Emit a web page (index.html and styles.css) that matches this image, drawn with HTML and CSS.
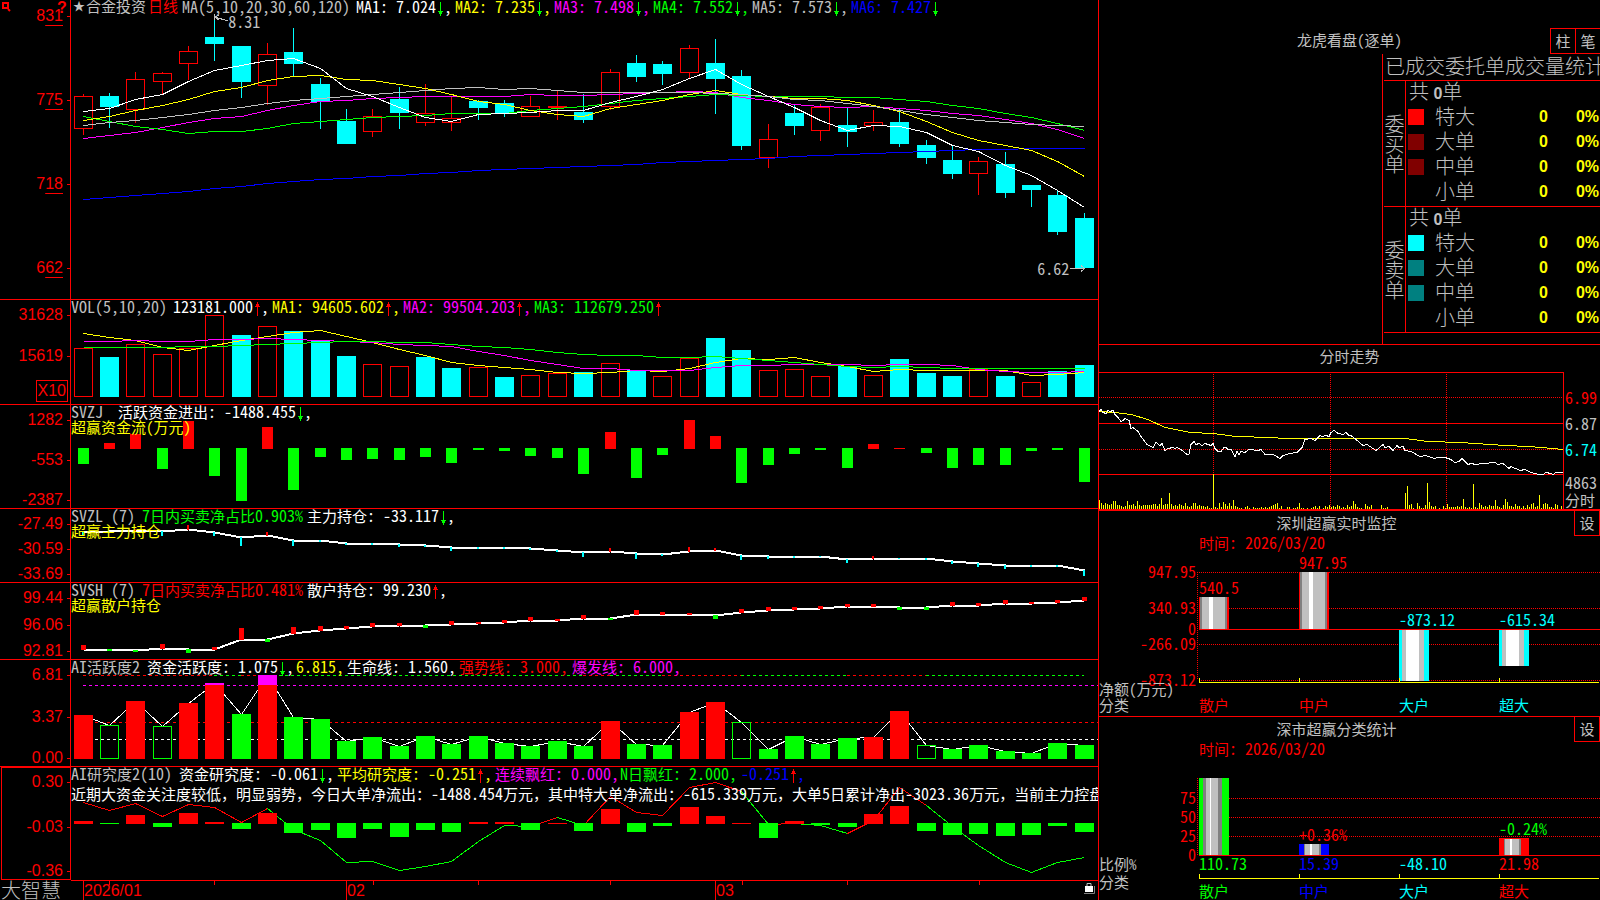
FILE: index.html
```
<!DOCTYPE html>
<html lang="zh-CN">
<head>
    <meta charset="UTF-8">
    <meta name="viewport" content="width=device-width, initial-scale=1.0">
    <title>合金投资 日线</title>
    <link rel="stylesheet" href="styles.css">
</head>
<body>
    <svg class="defs" aria-hidden="true">
        <symbol id="down" viewBox="0 0 8 14">
            <path d="M4.5 0V14M2 9.500H7M3 10.500H6M3 11.500H6" stroke="#00ff00" fill="none"/>
        </symbol>
        <symbol id="up" viewBox="0 0 8 14">
            <path d="M4.5 0V14M2 4.500H7M3 3.500H6M3 2.500H6" stroke="#ff0000" fill="none"/>
        </symbol>
    </svg>

    <div class="app">
        <main class="charts">
            <section class="panel">
                <div class="axis axis-main">
                    <svg class="corner" viewBox="0 0 10 10"><path d="M1 1H6V6H1ZM6 7L8 9" fill="none" stroke="#ff0000" stroke-width="2"/></svg>
                    <b class="help">?</b>
                    <span>8<u>31</u></span><span>7<u>75</u></span><span>7<u>18</u></span><span>6<u>62</u></span>
                </div>
                <div class="plot">
                    <svg id="kline" class="chart" viewBox="0 0 1027 299" preserveAspectRatio="none"></svg>
                    <div class="legend legend-main">
                        <span class="star">★</span><span class="zh">合金投资</span><span class="zh red">日线</span><span>MA(5,10,20,30,60,120)</span>
                        <span class="white">MA1: 7.024<svg class="arrow"><use href="#down"/></svg>,</span>
                        <span class="yellow">MA2: 7.235<svg class="arrow"><use href="#down"/></svg>,</span>
                        <span class="magenta">MA3: 7.498<svg class="arrow"><use href="#down"/></svg>,</span>
                        <span class="green">MA4: 7.552<svg class="arrow"><use href="#down"/></svg>,</span>
                        <span>MA5: 7.573<svg class="arrow"><use href="#down"/></svg>,</span>
                        <span class="blue">MA6: 7.427<svg class="arrow"><use href="#down"/></svg></span>
                    </div>
                    <span class="mark mark-high">8.31</span>
                    <span class="mark mark-low">6.62</span>
                </div>
            </section>

            <section class="panel">
                <div class="axis axis-vol">
                    <span>31628</span><span>15619</span><span class="unit">X10</span>
                </div>
                <div class="plot">
                    <svg id="vol" class="chart" viewBox="0 0 1027 104" preserveAspectRatio="none"></svg>
                    <div class="legend legend-vol">
                        <span>VOL(5,10,20)</span>
                        <span class="white">123181.000<svg class="arrow"><use href="#up"/></svg>,</span>
                        <span class="yellow">MA1: 94605.602<svg class="arrow"><use href="#up"/></svg>,</span>
                        <span class="magenta">MA2: 99504.203<svg class="arrow"><use href="#up"/></svg>,</span>
                        <span class="green">MA3: 112679.250<svg class="arrow"><use href="#up"/></svg></span>
                    </div>
                </div>
            </section>

            <section class="panel">
                <div class="axis"><span>1282</span><span>-553</span><span>-2387</span></div>
                <div class="plot">
                    <svg id="svzj" class="chart" viewBox="0 0 1027 103" preserveAspectRatio="none"></svg>
                    <div class="legend legend-svzj">
                        <span>SVZJ</span>
                        <span class="white"><span class="zh">活跃资金进出</span>: -1488.455<svg class="arrow"><use href="#down"/></svg>,</span>
                    </div>
                    <p class="subtitle zh">超赢资金流(万元)</p>
                </div>
            </section>

            <section class="panel">
                <div class="axis"><span>-27.49</span><span>-30.59</span><span>-33.69</span></div>
                <div class="plot">
                    <svg id="svzl" class="chart" viewBox="0 0 1027 73" preserveAspectRatio="none"></svg>
                    <div class="legend legend-hold">
                        <span>SVZL (7)</span>
                        <span class="green">7<span class="zh">日内买卖净占比</span>0.903%</span>
                        <span class="white"><span class="zh">主力持仓</span>: -33.117<svg class="arrow"><use href="#down"/></svg>,</span>
                    </div>
                    <p class="subtitle zh">超赢主力持仓</p>
                </div>
            </section>

            <section class="panel">
                <div class="axis"><span>99.44</span><span>96.06</span><span>92.81</span></div>
                <div class="plot">
                    <svg id="svsh" class="chart" viewBox="0 0 1027 76" preserveAspectRatio="none"></svg>
                    <div class="legend legend-hold">
                        <span>SVSH (7)</span>
                        <span class="red">7<span class="zh">日内买卖净占比</span>0.481%</span>
                        <span class="white"><span class="zh">散户持仓</span>: 99.230<svg class="arrow"><use href="#up"/></svg>,</span>
                    </div>
                    <p class="subtitle zh">超赢散户持仓</p>
                </div>
            </section>

            <section class="panel">
                <div class="axis"><span>6.81</span><span>3.37</span><span>0.00</span></div>
                <div class="plot">
                    <svg id="active" class="chart" viewBox="0 0 1027 106" preserveAspectRatio="none"></svg>
                    <div class="legend legend-active">
                        <span>AI<span class="zh">活跃度</span>2</span>
                        <span class="white"><span class="zh">资金活跃度</span>: 1.075<svg class="arrow"><use href="#down"/></svg>,</span>
                        <span class="yellow">6.815,</span>
                        <span class="white"><span class="zh">生命线</span>: 1.560,</span>
                        <span class="red"><span class="zh">强势线</span>: 3.000,</span>
                        <span class="magenta"><span class="zh">爆发线</span>: 6.000,</span>
                    </div>
                </div>
            </section>

            <section class="panel panel-last">
                <div class="axis axis-selected"><span>0.30</span><span>-0.03</span><span>-0.36</span></div>
                <div class="plot">
                    <svg id="research" class="chart" viewBox="0 0 1027 113" preserveAspectRatio="none"></svg>
                    <div class="legend legend-research">
                        <span>AI<span class="zh">研究度</span>2(10)</span>
                        <span class="white"><span class="zh">资金研究度</span>: -0.061<svg class="arrow"><use href="#down"/></svg>,</span>
                        <span class="yellow"><span class="zh">平均研究度</span>: -0.251<svg class="arrow"><use href="#up"/></svg>,</span>
                        <span class="magenta"><span class="zh">连续飘红</span>: 0.000,</span>
                        <span class="green">N<span class="zh">日飘红</span>: 2.000,</span>
                        <span class="blue">-0.251<svg class="arrow"><use href="#up"/></svg>,</span>
                    </div>
                    <p class="advice"><span class="zh">近期大资金关注度较低，明显弱势，今日大单净流出：</span>-1488.454<span class="zh">万元，其中特大单净流出：</span>-615.339<span class="zh">万元，大单</span>5<span class="zh">日累计净出</span>-3023.36<span class="zh">万元，当前主力控盘</span></p>
                </div>
            </section>

            <footer class="timeline">
                <div class="brand">大智慧</div>
                <div class="months">
                    <svg id="ticks" class="chart" viewBox="0 0 1027 19" preserveAspectRatio="none"></svg>
                    <span></span><span>2026/01</span><span>02</span><span>03</span>
                    <svg class="lock" viewBox="0 0 11 12">
                        <path d="M3 4V1.500H7V4" fill="none" stroke="#c0c0c0"/>
                        <path d="M1 4H9V10H1Z" fill="#ffffff"/>
                        <path d="M0 11.500H10.500V4" fill="none" stroke="#808080"/>
                    </svg>
                </div>
            </footer>
        </main>

        <aside class="side">
            <section class="orders">
                <header class="orders-head">
                    <h2>龙虎看盘(逐单)</h2>
                    <div class="switch"><button type="button">柱</button><button type="button">笔</button></div>
                </header>
                <div class="orders-body">
                    <div class="stats">
                        <h3>已成交委托单成交量统计</h3>
                        <table>
                            <colgroup><col class="c-side"><col class="c-swatch"><col class="c-name"><col class="c-count"><col class="c-pct"></colgroup>
                            <tbody>
                                <tr><th rowspan="5" scope="rowgroup">委<br>买<br>单</th><td colspan="4" class="total">共<b> 0</b>单</td></tr>
                                <tr><td><i class="swatch buy-xl"></i></td><td>特大</td><td class="num">0</td><td class="num">0%</td></tr>
                                <tr><td><i class="swatch buy"></i></td><td>大单</td><td class="num">0</td><td class="num">0%</td></tr>
                                <tr><td><i class="swatch buy"></i></td><td>中单</td><td class="num">0</td><td class="num">0%</td></tr>
                                <tr><td></td><td>小单</td><td class="num">0</td><td class="num">0%</td></tr>
                            </tbody>
                            <tbody>
                                <tr><th rowspan="5" scope="rowgroup">委<br>卖<br>单</th><td colspan="4" class="total">共<b> 0</b>单</td></tr>
                                <tr><td><i class="swatch sell-xl"></i></td><td>特大</td><td class="num">0</td><td class="num">0%</td></tr>
                                <tr><td><i class="swatch sell"></i></td><td>大单</td><td class="num">0</td><td class="num">0%</td></tr>
                                <tr><td><i class="swatch sell"></i></td><td>中单</td><td class="num">0</td><td class="num">0%</td></tr>
                                <tr><td></td><td>小单</td><td class="num">0</td><td class="num">0%</td></tr>
                            </tbody>
                        </table>
                    </div>
                </div>
            </section>

            <section class="intraday">
                <h2>分时走势</h2>
                <div class="intraday-body">
                    <svg id="intraday" viewBox="0 0 466 137" preserveAspectRatio="none"></svg>
                    <div class="scale">
                        <span class="red">6.99</span><span>6.87</span><span class="cyan">6.74</span>
                        <span class="scale-vol">4863</span><span class="zh">分时</span>
                    </div>
                </div>
            </section>

            <section class="monitor">
                <header class="monitor-head"><h2>深圳超赢实时监控</h2><button type="button">设</button></header>
                <p class="date"><span class="zh">时间</span>: 2026/03/20</p>
                <svg id="netflow" width="501" height="164"></svg>
            </section>

            <section class="monitor monitor-last">
                <header class="monitor-head"><h2>深市超赢分类统计</h2><button type="button">设</button></header>
                <p class="date"><span class="zh">时间</span>: 2026/03/20</p>
                <svg id="ratio" width="501" height="142"></svg>
            </section>
        </aside>
    </div>

    <script src="charts.js"></script>
</body>
</html>
```
FILE: styles.css
```
* {
    box-sizing: border-box;
}

body {
    margin: 0;
    background: #000000;
    color: #c0c0c0;
    font-family: "Noto Sans CJK SC", sans-serif;
    font-size: 16px;
    font-feature-settings: "hwid";
}

h2, h3, p {
    margin: 0;
    font-weight: inherit;
}

.defs {
    display: none;
}

.zh {
    font-size: 15px;
}

.white { color: #ffffff; }
.yellow { color: #ffff00; }
.magenta { color: #ff00ff; }
.green { color: #00ff00; }
.blue { color: #0000ff; }
.red { color: #ff0000; }
.cyan { color: #00ffff; }

.app {
    display: grid;
    grid-template-columns: minmax(0, 1fr) 502px;
    min-height: 100vh;
}

/* left side: stacked indicator panels */
.charts {
    display: grid;
    grid-template-rows: 300fr 105fr 104fr 74fr 77fr 107fr 113fr 20px;
}

.panel {
    display: grid;
    grid-template-columns: 71px minmax(0, 1fr);
    border-bottom: 1px solid #ff0000;
}

.panel-last {
    border-bottom: none;
}

.axis {
    position: relative;
    display: flex;
    flex-direction: column;
    justify-content: space-between;
    align-items: flex-end;
    padding: 7px 7px 0 0;
    border-right: 1px solid #ff0000;
    color: #ff0000;
    font-family: "Liberation Sans", sans-serif;
    line-height: 16px;
}

.axis span {
    position: relative;
}

.axis span::after {
    content: "";
    position: absolute;
    top: 8px;
    left: calc(100% + 4px);
    width: 3px;
    height: 1px;
    background: #ff0000;
}

.axis-main {
    padding-top: 8px;
    padding-bottom: 23px;
}

.axis u {
    text-decoration-thickness: 1px;
    text-underline-offset: 4px;
}

.axis-vol {
    padding-right: 2px;
    padding-bottom: 2px;
}

.axis-vol span {
    margin-right: 5px;
}

.axis-vol span:nth-child(2) {
    margin-top: 9px;
}

.axis-vol .unit {
    margin-right: 0;
    padding: 0 1px;
    border: 1px solid #ff0000;
    line-height: 20px;
}

.axis-vol .unit::after {
    display: none;
}

.axis-selected {
    margin-left: 1px;
    padding-top: 6px;
    border: 1px solid #ff0000;
}

.corner {
    position: absolute;
    top: 2px;
    left: 2px;
    width: 10px;
    height: 10px;
}

.help {
    position: absolute;
    top: 0;
    left: 57px;
}

.plot {
    position: relative;
    overflow-x: clip;
}

.chart {
    position: absolute;
    inset: 0;
    width: 100%;
    height: 100%;
    shape-rendering: crispEdges;
}

.legend {
    position: relative;
    display: grid;
    line-height: 12px;
    white-space: nowrap;
}

.legend-main { grid-template-columns: 13px 62px 34px 174px repeat(6, 99px); padding-left: 2px; }
.legend-vol { grid-template-columns: 102px 99px 131px 131px auto; }
.legend-svzj { grid-template-columns: 47px auto; }
.legend-hold { grid-template-columns: 71px 165px auto; }
.legend-active { grid-template-columns: 76px 149px 51px 112px 113px auto; }
.legend-research { grid-template-columns: 108px 158px 158px 125px 121px auto; }

.star {
    font-size: 12px;
}

.arrow {
    width: 8px;
    height: 14px;
    margin: -2px 0;
    vertical-align: -1px;
    shape-rendering: crispEdges;
}

.subtitle {
    position: relative;
    margin-top: 2px;
    color: #ffff00;
    line-height: 12px;
}

.advice {
    position: relative;
    margin-top: 6px;
    color: #ffffff;
    line-height: 12px;
    white-space: nowrap;
}

/* keep the commas full width */
.advice .zh {
    font-feature-settings: normal;
}

.mark {
    position: absolute;
    line-height: 12px;
}

.mark-high {
    top: 5%;
    left: 15.3%;
}

.mark-low {
    top: 87.5%;
    right: 2.8%;
}

.timeline {
    display: grid;
    grid-template-columns: 71px minmax(0, 1fr);
}

.brand {
    padding-left: 1px;
    font-size: 20px;
    font-weight: 300;
    line-height: 20px;
}

.months {
    position: relative;
    display: grid;
    grid-template-columns: 12px 263fr 369fr 383fr;
    border-top: 1px solid #ff0000;
    color: #ff0000;
    font-family: "Liberation Sans", sans-serif;
    line-height: 19px;
}

.months span + span {
    border-left: 1px solid #ff0000;
}

.lock {
    position: absolute;
    top: 1px;
    right: 3px;
    width: 11px;
    height: 12px;
}

/* right side */
.side {
    display: flex;
    flex-direction: column;
    border-left: 1px solid #ff0000;
    overflow-x: clip;
}

.side svg {
    display: block;
    shape-rendering: crispEdges;
}

.side h2 {
    font-size: 15px;
    text-align: center;
}

button {
    width: 26px;
    height: 26px;
    padding: 0;
    border: 1px solid #ff0000;
    background: #000000;
    color: #c0c0c0;
    font: inherit;
    font-size: 15px;
    line-height: 20px;
}

.orders {
    display: flex;
    flex: 1;
    flex-direction: column;
    min-height: 345px;
    border-bottom: 1px solid #ff0000;
}

.orders-head {
    display: grid;
    grid-template-columns: 1fr auto 1fr;
    padding-top: 28px;
}

.orders-head h2 {
    grid-column: 2;
    line-height: 24px;
}

.switch {
    display: flex;
    justify-content: flex-end;
}

.switch button {
    width: 25px;
    border-right: none;
}

.orders-body {
    display: flex;
    flex: 1;
    justify-content: flex-end;
}

.stats {
    width: 218px;
    padding-left: 1px;
    border-left: 1px solid #ff0000;
    font-weight: 300;
}

.stats h3 {
    height: 26px;
    padding-left: 1px;
    font-size: 20px;
    line-height: 24px;
    white-space: nowrap;
}

.stats table {
    width: 216px;
    table-layout: fixed;
    border-spacing: 0;
    border-top: 1px solid #ff0000;
    font-size: 20px;
    line-height: 20px;
}

.c-side { width: 22px; }
.c-swatch { width: 29px; }
.c-name { width: 50px; }
.c-count { width: 64px; }
.c-pct { width: 51px; }

.stats tr {
    height: 25px;
}

.stats td {
    height: 25px;
    padding: 0 0 3px;
    vertical-align: top;
}

.stats th {
    padding: 0;
    border-right: 1px solid #ff0000;
    border-bottom: 1px solid #ff0000;
    font-weight: inherit;
}

.stats tr:last-child td {
    border-bottom: 1px solid #ff0000;
}

.stats .total {
    padding-left: 3px;
}

.stats b, .stats .num {
    font-family: "Liberation Sans", sans-serif;
    font-size: 16px;
    font-weight: bold;
}

.stats b {
    line-height: 1px;
}

.stats .num {
    padding-right: 1px;
    color: #ffff00;
    line-height: 22px;
    text-align: right;
}

.swatch {
    display: block;
    width: 16px;
    height: 16px;
    margin: 3px 0 0 2px;
}

.buy-xl { background: #ff0000; }
.buy { background: #800000; }
.sell-xl { background: #00ffff; }
.sell { background: #008080; }

.intraday {
    border-bottom: 2px solid #ff0000;
}

.intraday h2 {
    height: 27px;
    line-height: 22px;
}

.intraday-body {
    display: flex;
    height: 137px;
}

.intraday-body svg {
    flex: 1;
    min-width: 0;
    height: 137px;
}

.scale {
    display: flex;
    flex-direction: column;
    gap: 12px;
    width: 35px;
    padding-top: 18px;
    line-height: 14px;
}

.scale-vol {
    margin-top: 7px;
}

.scale .zh {
    margin-top: -8px;
}

.monitor {
    border-bottom: 1px solid #ff0000;
}

.monitor-last {
    border-bottom: none;
}

.monitor-head {
    display: flex;
    height: 25px;
}

.monitor-head h2 {
    flex: 1;
    line-height: 23px;
}

.monitor-head button {
    height: 25px;
    border-top: none;
}

.date {
    height: 16px;
    padding-left: 100px;
    color: #ff0000;
    line-height: 12px;
}
```
FILE: charts.js
```
const RED = '#ff0000';
const GREEN = '#00ff00';
const CYAN = '#00ffff';
const WHITE = '#ffffff';
const YELLOW = '#ffff00';
const MAGENTA = '#ff00ff';
const BLUE = '#0000ff';
const GRAY = '#c0c0c0';
const DARK = '#808080';

// centre of bar i
const cx = i => Math.floor(12 + 26.35 * i);

const rect = (x, y, w, h, fill) => `<rect x="${x}" y="${y}" width="${w}" height="${h}" fill="${fill}"/>`;
const hollow = (x, y, w, h, color) => `<rect x="${x + 0.5}" y="${y + 0.5}" width="${w - 1}" height="${h - 1}" fill="none" stroke="${color}"/>`;
const seg = (x1, y1, x2, y2, color, extra = '') => `<path d="M${x1} ${y1}L${x2} ${y2}" stroke="${color}" ${extra}/>`;
const text = (x, y, color, str, extra = '') => `<text x="${x}" y="${y}" fill="${color}" ${extra}>${str}</text>`;

function line(values, color, width = 1, from = 0) {
    const points = values.map((v, i) => `${cx(i + from) + 0.5},${v + 0.5}`).join(' ');
    return `<polyline points="${points}" fill="none" stroke="${color}" stroke-width="${width}"/>`;
}

function draw(id, parts) {
    document.getElementById(id).innerHTML = parts.join('');
}

// type, high, body top, body bottom, low
const candles = [
    ['r', 94, 96, 129, 135], ['c', 93, 96, 107, 128], ['r', 72, 79, 110, 123], ['r', 72, 73, 82, 94],
    ['r', 46, 51, 64, 80], ['c', 16, 37, 44, 61], ['c', 46, 46, 82, 98], ['r', 43, 54, 86, 105],
    ['c', 28, 52, 64, 77], ['c', 78, 84, 102, 129], ['c', 109, 121, 144, 144], ['r', 109, 116, 132, 137],
    ['c', 87, 99, 113, 129], ['r', 84, 113, 123, 126], ['r', 96, 118, 123, 131], ['c', 100, 101, 108, 120],
    ['c', 100, 103, 113, 117], ['r', 96, 106, 117, 117], ['r', 91, 106, 108, 120], ['c', 94, 112, 120, 123],
    ['r', 69, 72, 107, 110], ['c', 55, 63, 77, 82], ['c', 61, 64, 74, 85], ['r', 45, 48, 73, 78],
    ['c', 39, 63, 79, 114], ['c', 70, 76, 146, 150], ['r', 124, 139, 158, 168], ['c', 105, 113, 126, 135],
    ['r', 104, 107, 131, 141], ['c', 108, 125, 132, 147], ['r', 110, 122, 126, 131], ['c', 109, 122, 144, 147],
    ['c', 140, 145, 158, 164], ['c', 146, 160, 174, 179], ['r', 157, 161, 174, 195], ['c', 152, 164, 193, 198],
    ['c', 185, 185, 190, 207], ['c', 191, 195, 232, 235], ['c', 213, 218, 268, 268]
];

const ma = {
    [BLUE]: [199, 197, 195, 193, 191, 188, 186, 183, 181, 179, 178, 176, 175, 173, 172, 170, 169, 168, 167, 166, 165, 164, 162, 161, 160, 159, 158, 156, 155, 154, 153, 152, 151, 150, 149, 149, 148, 148, 148],
    [MAGENTA]: [138, 135, 132, 127, 122, 118, 116, 110, 105, 101, 100, 98, 97, 96, 96, 96, 96, 94, 95, 95, 94, 93, 92, 91, 92, 97, 100, 104, 106, 107, 106, 108, 110, 113, 115, 119, 123, 129, 138],
    [GREEN]: [116, 121, 126, 129, 133, 131, 131, 128, 123, 121, 119, 117, 116, 115, 113, 113, 113, 110, 108, 106, 103, 100, 98, 96, 94, 95, 96, 96, 96, 97, 97, 99, 101, 105, 108, 113, 117, 123, 130],
    [YELLOW]: [120, 116, 110, 105, 99, 91, 87, 80, 76, 75, 79, 80, 84, 88, 94, 101, 104, 110, 114, 116, 108, 104, 100, 94, 90, 94, 96, 98, 98, 100, 105, 111, 121, 132, 140, 145, 150, 161, 176],
    [GRAY]: [125, 122, 120, 117, 114, 110, 107, 103, 100, 98, 96, 94, 92, 90, 88, 87, 89, 88, 90, 92, 92, 92, 92, 92, 93, 94, 96, 99, 100, 103, 106, 110, 114, 117, 120, 122, 124, 125, 126],
    [WHITE]: [111, 108, 99, 94, 81, 70, 65, 60, 58, 68, 88, 96, 107, 117, 121, 114, 113, 112, 110, 110, 102, 96, 89, 78, 69, 84, 96, 107, 120, 130, 125, 126, 132, 145, 151, 165, 175, 190, 207]
};

draw('kline', [
    ...candles.map(([type, high, top, bottom, low], i) => {
        const x = cx(i);
        if (type === 'c') {
            return rect(x, high, 1, low - high, CYAN) + rect(x - 9, top, 19, bottom - top, CYAN);
        }
        return rect(x, high, 1, top - high, RED) + rect(x, bottom, 1, low - bottom, RED) + hollow(x - 9, top, 19, bottom - top, RED);
    }),
    ...Object.entries(ma).map(([color, values]) => line(values, color)),
    `<path d="M157 21L144 17M143.500 14V20M144 17L148 15M144 17L148 20" stroke="${GRAY}" fill="none"/>`,
    `<path d="M999 268.500H1013M1010 265.500L1013.500 268.500L1010 271.500" stroke="${GRAY}" fill="none"/>`
]);

// volume
const volTop = [48, 57, 44, 54, 48, 15, 35, 26, 31, 40, 56, 64, 66, 57, 68, 67, 77, 75, 73, 72, 63, 70, 76, 58, 38, 50, 70, 69, 76, 66, 75, 59, 73, 76, 69, 76, 82, 71, 65];
const volColor = 'rcrrrrcrcccrrccrcrrcrcrrccrrrcrcccrcrcc';
const volMa = {
    [YELLOW]: [33, 37, 40, 47, 50, 45, 40, 36, 32, 30, 36, 42, 49, 55, 62, 65, 67, 69, 72, 73, 72, 70, 71, 68, 62, 58, 59, 57, 62, 66, 71, 69, 70, 70, 70, 70, 75, 74, 72],
    [MAGENTA]: [41, 41, 40, 41, 41, 39, 39, 38, 39, 40, 41, 42, 44, 45, 46, 51, 55, 60, 64, 68, 68, 70, 70, 70, 67, 65, 65, 64, 64, 64, 65, 64, 64, 65, 69, 71, 72, 72, 71],
    [GREEN]: [47, 47, 47, 47, 46, 46, 45, 44, 43, 42, 41, 41, 42, 42, 44, 46, 47, 49, 52, 54, 55, 55, 57, 57, 56, 58, 60, 62, 64, 66, 67, 66, 67, 68, 68, 68, 68, 68, 68]
};

draw('vol', [
    ...volTop.map((top, i) => volColor[i] === 'c' ? rect(cx(i) - 9, top, 19, 97 - top, CYAN) : hollow(cx(i) - 9, top, 19, 97 - top, RED)),
    ...Object.entries(volMa).map(([color, values]) => line(values, color))
]);

// money flow, positive up in red, negative down in green
const signedBars = (values, base, width) => values.map((v, i) => {
    const x = cx(i) - (width - 1) / 2;
    return v > 0 ? rect(x, base + 1 - v, width, v, RED) : rect(x, base, width, -v, GREEN);
});

draw('svzj', signedBars([-16, 6, 15, -21, 28, -28, -53, 22, -42, -9, -12, -11, -12, -9, -15, -2, -3, -8, -10, -26, 17, -30, -7, 29, 13, -35, -17, -6, -2, -20, 5, 1, -5, -20, -17, -17, -3, -2, -34], 43, 11));

// holdings
const mainHold = [22, 22, 21, 22, 20, 23, 28, 26, 31, 31, 34, 34, 35, 36, 38, 38, 38, 39, 41, 43, 42, 44, 45, 42, 41, 46, 47, 47, 47, 50, 49, 49, 49, 52, 54, 56, 56, 56, 61];
const mainDelta = [-3, 0, 1, -4, 4, -3, -8, 3, -5, -1, -1, -1, -2, -1, -3, -1, -1, -1, -1, -4, 3, -5, -1, 4, 2, -4, -2, -1, 0, -3, 2, 0, -1, -2, -3, -3, -1, -1, -5];
const retailHold = [66, 66, 67, 65, 66, 66, 56, 56, 50, 47, 45, 43, 42, 42, 41, 40, 39, 37, 37, 35, 35, 31, 31, 31, 32, 29, 27, 26, 25, 23, 23, 24, 24, 22, 22, 20, 20, 19, 17];
const retailDelta = [4, -1, -1, 4, -3, 2, 11, -2, 6, 4, 2, 3, 2, -2, 3, 1, 2, 3, 1, 3, -1, 4, 2, 1, -3, 3, 3, 2, 2, 2, 2, -2, -2, 3, 2, 3, 1, 2, 3];

const deltas = (hold, delta, width, down) => delta.map((d, i) => {
    const x = cx(i) - Math.floor(width / 2);
    return d > 0 ? rect(x, hold[i] - d, width, d + 1, RED) : rect(x, hold[i], width, 1 - d, down);
});

draw('svzl', [line(mainHold, WHITE, 2), ...deltas(mainHold, mainDelta, 2, CYAN)]);
draw('svsh', [line(retailHold, WHITE, 2), ...deltas(retailHold, retailDelta, 5, GREEN)]);

// activity
const activeTop = [55, 65, 41, 66, 43, 23, 54, 15, 57, 59, 81, 77, 86, 76, 84, 76, 83, 86, 81, 86, 61, 84, 85, 52, 42, 62, 89, 76, 84, 78, 77, 51, 85, 89, 85, 91, 93, 83, 85];
const activeType = 'RgRgRRGRGGGGGGGGGGGGRGGRRgGGGGRRgGGGGGG';
const peakRuns = [[0, 5, RED], [5, 6, GREEN], [6, 7, RED], [7, 19, GREEN], [19, 20, RED], [20, 22, GREEN], [22, 25, RED], [25, 29, GREEN], [29, 32, RED], [32, 38, GREEN]];
const dash = 'stroke-dasharray="3 3"';

draw('active', [
    ...peakRuns.map(([a, b, color]) => seg(cx(a), 15.5, cx(b), 15.5, color, dash)),
    seg(12, 25.5, 1027, 25.5, MAGENTA, dash),
    seg(12, 62.5, 1027, 62.5, RED, dash),
    seg(12, 79.5, 1027, 79.5, WHITE, dash),
    line(activeTop, WHITE),
    ...activeTop.map((top, i) => {
        const x = cx(i) - 9;
        if (activeType[i] === 'g') {
            return hollow(x, top, 19, 99 - top, GREEN);
        }
        const body = rect(x, top, 19, 99 - top, activeType[i] === 'R' ? RED : GREEN);
        // the part over 6.000 is magenta
        return top < 25 ? body + rect(x, top, 19, 25 - top, MAGENTA) : body;
    })
]);

// research
const research = [35, 43, 36, 49, 37, 40, 55, 41, 62, 73, 95, 94, 103, 99, 94, 74, 58, 59, 50, 58, 29, 45, 48, 20, 15, 24, 57, 56, 58, 66, 53, 20, 38, 59, 78, 95, 105, 95, 90];
const researchRuns = [[0, 7, RED], [7, 17, GREEN], [17, 18, RED], [18, 19, GREEN], [19, 25, RED], [25, 26, GREEN], [26, 27, RED], [27, 29, GREEN], [29, 32, RED], [32, 38, GREEN]];

draw('research', [
    ...researchRuns.map(([a, b, color]) => line(research.slice(a, b + 1), color, 1, a)),
    ...signedBars([3, -1, 9, -4, 11, 2, -6, 11, -10, -7, -15, -6, -14, -7, -9, 2, 2, -7, 1, -8, 15, -9, -3, 17, 8, 1, -15, 3, -2, -4, 10, 18, -8, -12, -11, -13, -12, -3, -9], 56, 19)
]);

draw('ticks', [38, 143, 302, 407, 539, 671, 776, 908].map(x => rect(x, 0, 1, 4, RED)));

// intraday
const price = '1,39 3,37 5,40 8,41 10,38 12,39 15,38 17,42 20,45 23,49 25,48 27,46 31,48 33,56 35,55 40,59 43,64 49,72 55,75 58,70 62,73 64,71 67,78 70,76 75,75 77,76 79,75 83,77 89,82 91,82 93,72 96,69 98,72 101,71 104,73 107,71 113,73 115,71 117,76 120,79 123,79 126,75 128,75 130,77 133,77 137,84 139,79 141,82 143,79 147,80 151,77 160,78 163,77 167,82 175,82 182,86 185,83 192,81 199,80 204,75 207,67 213,66 217,68 222,63 224,64 228,63 231,64 233,60 236,58 240,61 245,62 248,60 251,63 253,63 258,67 265,73 269,72 278,78 285,72 287,75 291,74 295,78 299,73 301,75 305,74 307,78 313,79 322,84 328,83 336,86 340,85 347,85 353,87 357,90 361,89 364,86 370,92 373,91 378,92 385,91 397,90 400,92 405,91 411,96 413,94 422,98 427,97 433,100 441,102 445,102 448,100 453,101 455,102 458,100 465,100';
const average = '1,39 17,40 33,42 50,47 67,55 93,60 115,61 138,64 173,65 187,66 307,66 330,69 363,70 377,71 407,73 430,74 443,75 465,77';
const turnover = [
    9, 6, 4, 6, 5, 4, 5, 8, 8, 4, 4, 3, 2, 3, 8, 4, 4, 5, 3, 8, 4, 3, 4, 4, 4, 4, 4, 5, 5, 3, 5, 11, 4, 5, 5, 16, 5, 3, 4,
    3, 5, 4, 3, 6, 3, 2, 3, 6, 6, 3, 4, 3, 3, 2, 3, 1, 1, 35, 2, 1, 6, 2, 7, 5, 3, 6, 3, 9, 3, 2, 1, 1, 0, 2, 3, 1, 0, 2, 1,
    1, 1, 2, 1, 2, 1, 2, 3, 4, 5, 6, 1, 3, 0, 0, 2, 2, 0, 1, 1, 2, 6, 1, 1, 0, 1, 0, 1, 2, 3, 1, 3, 0, 1, 3, 2, 4, 2, 3, 2,
    4, 3, 1, 2, 1, 4, 2, 3, 8, 5, 2, 1, 1, 0, 5, 3, 2, 4, 0, 0, 0, 0, 4, 1, 1, 2, 0, 0, 0, 0, 0, 0, 0, 0, 16, 23, 4, 5, 1, 0, 6, 3, 1, 1, 4,
    26, 7, 3, 2, 3, 0, 1, 0, 3, 1, 5, 2, 2, 2, 2, 3, 2, 3, 10, 2, 1, 2, 1, 25, 2, 1, 6, 4, 2, 3, 2, 4, 3, 3, 9, 3, 2, 1, 4, 10,
    7, 3, 3, 2, 5, 3, 3, 1, 3, 1, 4, 2, 5, 6, 2, 3, 14, 1, 5, 6, 5, 2, 2, 1, 5, 4, 0, 3
];
const dots = 'stroke-dasharray="1 1"';

draw('intraday', [
    `<path d="M0 .5H464.500V137M0 51.500H464M0 102.500H464" fill="none" stroke="${RED}"/>`,
    `<path d="M0 25.500H464M0 77.500H464M114.500 0V137M231.500 0V137M347.500 0V137" stroke="${RED}" ${dots}/>`,
    ...turnover.map((v, i) => rect(i * 2, 137 - v, 1, v, YELLOW)),
    `<polyline points="${average}" transform="translate(-1 .5)" fill="none" stroke="${YELLOW}"/>`,
    `<polyline points="${price}" transform="translate(-1 .5)" fill="none" stroke="${WHITE}"/>`
]);

// striped columns, stripes are [width, colour]
function column(x, y, h, stripes) {
    return stripes.map(([w, color]) => {
        const part = rect(x, y, w, h, color);
        x += w;
        return part;
    }).join('');
}

const gain = [[1, RED], [2, DARK], [7, GRAY], [4, WHITE], [12, GRAY], [2, DARK], [2, RED]];
const loss = [[3, CYAN], [4, GRAY], [13, WHITE], [5, GRAY], [5, CYAN]];
const share = c => [[5, c], [1, DARK], [5, GRAY], [2, WHITE], [7, GRAY], [2, DARK], [8, c]];
const zh = 'class="zh"';
const end = 'text-anchor="end"';

const scaleLabels = labels => labels.map(([y, str]) => text(97, y, RED, str, end));
const gridLines = (ys, bottom) => `<path d="${ys.map(y => `M100 ${y}.5H501`).join('')}M98.500 20V${bottom}" stroke="${RED}" ${dots}/>`;
const baseLine = y => `<path d="M100 ${y}.5H500M100.500 ${y - 4}V${y}M200.500 ${y - 4}V${y}M300.500 ${y - 4}V${y}M400.500 ${y - 4}V${y}" stroke="${YELLOW}"/>`;

draw('netflow', [
    gridLines([20, 56, 92, 128], 128),
    ...scaleLabels([[26, '947.95'], [62, '340.93'], [83, '0'], [98, '-266.09'], [134, '-873.12']]),
    column(100, 45, 32, gain),
    column(200, 20, 57, gain),
    column(300, 78, 51, loss),
    column(400, 78, 36, loss),
    seg(100, 77.5, 501, 77.5, RED),
    baseLine(130),
    text(100, 42, RED, '540.5'),
    text(200, 17, RED, '947.95'),
    text(300, 74, CYAN, '-873.12'),
    text(400, 74, CYAN, '-615.34'),
    text(100, 159, RED, '散户', zh),
    text(200, 159, RED, '中户', zh),
    text(300, 159, CYAN, '大户', zh),
    text(400, 159, CYAN, '超大', zh),
    text(0, 143, GRAY, '净额(万元)', zh),
    text(0, 159, GRAY, '分类', zh)
]);

draw('ratio', [
    gridLines([40, 59, 78], 97),
    ...scaleLabels([[46, '75'], [65, '50'], [84, '25'], [103, '0']]),
    column(100, 20, 77, [[4, GREEN], [3, DARK], [4, GRAY], [1, WHITE], [7, GRAY], [4, DARK], [7, GREEN]]),
    column(200, 86, 11, share(BLUE)),
    column(400, 80, 17, share(RED)),
    rect(400, 80, 30, 1, RED),
    seg(100, 97.5, 501, 97.5, RED),
    baseLine(120),
    text(200, 83, RED, '+0.36%'),
    text(400, 77, GREEN, '-0.24%'),
    text(100, 112, GREEN, '110.73'),
    text(200, 112, BLUE, '15.39'),
    text(300, 112, CYAN, '-48.10'),
    text(400, 112, RED, '21.98'),
    text(100, 139, GREEN, '散户', zh),
    text(200, 139, BLUE, '中户', zh),
    text(300, 139, CYAN, '大户', zh),
    text(400, 139, RED, '超大', zh),
    text(0, 112, GRAY, '比例%', zh),
    text(0, 130, GRAY, '分类', zh)
]);
```
